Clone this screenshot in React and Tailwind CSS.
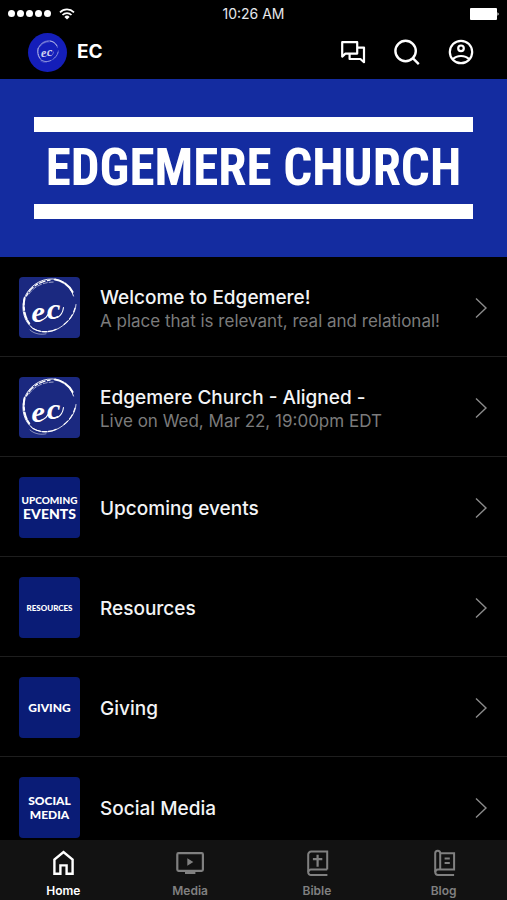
import { useState } from 'react';

const items = [
  { id: "welcome", title: "Welcome to Edgemere!", subtitle: "A place that is relevant, real and relational!", tile: "logo" },
  { id: "live", title: "Edgemere Church - Aligned -", subtitle: "Live on Wed, Mar 22, 19:00pm EDT", tile: "logo" },
  { id: "events", title: "Upcoming events", tile: "events" },
  { id: "resources", title: "Resources", tile: "resources" },
  { id: "giving", title: "Giving", tile: "giving" },
  { id: "social", title: "Social Media", tile: "social" },
];

const tabs = [
  { id: "home", label: "Home", Icon: HomeIcon },
  { id: "media", label: "Media", Icon: MediaIcon },
  { id: "bible", label: "Bible", Icon: BibleIcon },
  { id: "blog", label: "Blog", Icon: BlogIcon },
];

function HomeIcon() {
  return (
    <svg viewBox="0 0 28 28" className="size-7" fill="none" stroke="currentColor" strokeWidth="2.4">
      <path d="M5.4 24.8V10.6L14.5 3l9.1 7.6v14.2h-6v-8.4h-6.2v8.4z" />
    </svg>
  );
}

function MediaIcon() {
  return (
    <svg viewBox="0 0 28 28" className="size-7" fill="none" stroke="currentColor" strokeWidth="2.2">
      <rect x="1.3" y="4.2" width="25.6" height="17.6" rx="1.2" />
      <path d="M11.3 9.3v7.4l6-3.7z" fill="currentColor" stroke="none" />
      <path d="M9 22h10.4v3H9z" fill="currentColor" stroke="none" />
    </svg>
  );
}

function BibleIcon() {
  return (
    <svg viewBox="0 0 28 28" className="size-7" fill="none" stroke="currentColor" strokeWidth="2">
      <path d="M24.2 20.6V2.6H8.2a3 3 0 0 0-3 3v17.6a2.8 2.8 0 0 0 2.8 2.8h16.4" />
      <path d="M5.4 22.8a2.4 2.4 0 0 1 2.6-2.2h16.2" />
      <path d="M14.6 5.8v12M9.9 10.2h9.4" strokeWidth="2.2" />
    </svg>
  );
}

function BlogIcon() {
  return (
    <svg viewBox="0 0 28 28" className="size-7" fill="none" stroke="currentColor" strokeWidth="2">
      <path d="M10.2 4.2h13.9v16.4H8a2.7 2.7 0 0 0 0 5.4h16.1" />
      <path d="M5.2 23.3V4.2a2.5 2.5 0 0 1 5 0v16.4" />
      <path d="M14.6 9.4h5.2M14.6 14h5.2" />
    </svg>
  );
}

function ChatIcon() {
  return (
    <svg viewBox="0 0 28 28" className="size-7" fill="none" stroke="currentColor" strokeWidth="2.2">
      <path d="M3.2 4.2h15v11.4H6.4l-3.2 3z" strokeLinejoin="round" />
      <path d="M18.2 9.6h6.8v14.6l-3.6-3.2H10.6v-5.2" strokeLinejoin="round" />
    </svg>
  );
}

function SearchIcon() {
  return (
    <svg viewBox="0 0 28 28" className="size-7" fill="none" stroke="currentColor" strokeWidth="2.4">
      <circle cx="12.6" cy="13" r="10.2" />
      <path d="M19.8 20.2l6 6" />
    </svg>
  );
}

function ProfileIcon() {
  return (
    <svg viewBox="0 0 28 28" className="size-7" fill="none" stroke="currentColor" strokeWidth="2.2">
      <circle cx="14" cy="14" r="11.2" />
      <circle cx="14" cy="10.3" r="2.8" />
      <path d="M5.8 21.4c2-2.3 5-3.4 8.2-3.4s6.2 1.1 8.2 3.4" />
    </svg>
  );
}

// hand brushed ring with the script initials inside
function BrushLogo({ className }) {
  return (
    <svg viewBox="0 0 61 61" className={className} fill="none" stroke="#fff" strokeLinecap="round">
      <path d="M54.5 19C51 8 43 2.5 33.5 2C21 1.5 8.5 10 4.8 23C2.5 33 5 44.5 13 50.5" strokeWidth="0.9" />
      <path d="M5.6 21C3.6 30 5.4 41 11.5 48" strokeWidth="2" strokeDasharray="7 2 3 2.5" />
      <path d="M7.5 19C11.5 10.5 20 4.5 31 3.2" strokeWidth="1.3" strokeDasharray="3 2 6 2.5" />
      <path d="M36 2.6C44 4 50 8.5 53.6 15" strokeWidth="2" strokeDasharray="9 2 12 2" />
      <path d="M10 17C16 8.5 25 5 36 5" strokeWidth="0.6" strokeDasharray="4 2" />
      <path d="M12 50C20 56.5 32 56.5 41 50.5C50 45 56.5 36.5 57 27.5" strokeWidth="0.8" />
      <path d="M14 51.5C22 56 31 55.5 38.5 51.5" strokeWidth="1.2" strokeDasharray="8 2 4 2" />
      <path d="M11 53C16 57.5 23 57.8 27 56.8" strokeWidth="0.5" />
      <path d="M45 47.5C50 43.5 54 38 56 31" strokeWidth="1.1" strokeDasharray="5 3" />
      <g fill="#fff" stroke="none" className="font-['Liberation_Serif',serif] font-bold italic" fontSize="30">
        <text x="12.5" y="44.5">e</text>
        <text x="28" y="41.5">c</text>
      </g>
      <path d="M24 42.5C26.5 41.5 28 39.5 29 37.5M38.5 40.5C42 38.5 44 34.5 44.5 30.5" strokeWidth="1.1" />
    </svg>
  );
}

function Tile({ type }) {
  if (type === "logo") {
    return (
      <div className="size-[61px] shrink-0 rounded-sm bg-[#1b2980]">
        <BrushLogo className="size-full" />
      </div>
    );
  }

  return (
    <div className="flex size-[61px] shrink-0 flex-col items-center justify-center rounded-sm bg-[#0a1c76] font-['Lato',sans-serif] font-black text-white">
      {type === "events" && (
        <>
          <span className="text-[10px] leading-3">UPCOMING</span>
          <span className="text-sm leading-4">EVENTS</span>
        </>
      )}
      {type === "resources" && <span className="text-[8px] leading-3">RESOURCES</span>}
      {type === "giving" && <span className="text-xs leading-4">GIVING</span>}
      {type === "social" && (
        <>
          <span className="text-xs leading-[14px]">SOCIAL</span>
          <span className="text-xs leading-[14px]">MEDIA</span>
        </>
      )}
    </div>
  );
}

function StatusBar() {
  return (
    <div className="grid h-[27px] shrink-0 grid-cols-3 items-center px-2">
      <div className="flex items-center gap-2">
        <div className="flex gap-0.5">
          {[1, 2, 3, 4, 5].map((dot) => (
            <span key={dot} className="size-[7px] rounded-full bg-white" />
          ))}
        </div>
        <svg viewBox="0 0 16 12" className="h-3 w-4" fill="none" stroke="#fff" strokeWidth="1.7">
          <path d="M1 4.3a10 10 0 0 1 14 0M3.5 7a6.4 6.4 0 0 1 9 0" />
          <path d="M8 11.5L5.4 8.9a3.7 3.7 0 0 1 5.2 0z" fill="#fff" stroke="none" />
        </svg>
      </div>
      <span className="text-center text-sm leading-4 text-gray-200">10:26 AM</span>
      <svg viewBox="0 0 31 12" className="h-3 w-[31px] justify-self-end" fill="#fff">
        <rect x="2" width="27" height="12" rx="1" />
        <path d="M29.5 4.2a2 2 0 0 1 0 3.6z" />
      </svg>
    </div>
  );
}

export default function App() {
  const [activeTab, setActiveTab] = useState("home");

  return (
    <div className="flex h-screen flex-col bg-black font-['Inter',sans-serif] text-white">
      <StatusBar />

      <header className="flex h-[52px] shrink-0 items-center justify-between pr-8 pb-0.5 pl-7">
        <div className="flex items-center gap-2.5">
          <div className="flex size-[39px] items-center justify-center rounded-full bg-[#141eb9]">
            <BrushLogo className="size-6 opacity-80" />
          </div>
          <h1 className="text-[19px] leading-6 font-bold">EC</h1>
        </div>
        <div className="flex gap-[26px]">
          <button type="button" aria-label="Messages"><ChatIcon /></button>
          <button type="button" aria-label="Search"><SearchIcon /></button>
          <button type="button" aria-label="Profile"><ProfileIcon /></button>
        </div>
      </header>

      <main className="min-h-0 flex-1 overflow-y-auto [scrollbar-width:none]">
        <section className="bg-[#142ca0] px-[34px] py-[38px]">
          <div className="flex flex-col items-center border-y-[15px] border-white">
            <h2 className="font-['Roboto_Condensed','Liberation_Sans_Narrow',sans-serif] text-[51px] leading-[72px] font-bold whitespace-nowrap">
              EDGEMERE CHURCH
            </h2>
          </div>
        </section>

        <ul>
          {items.map((item) => (
            <li key={item.id} className="border-b border-[#1e1e1e]">
              <a href={`#${item.id}`} className="flex items-center gap-5 pt-5 pr-4 pb-[18px] pl-[19px]">
                <Tile type={item.tile} />
                <div className="min-w-0 flex-1 pt-0.5">
                  <p className="text-[19px] leading-6 font-medium text-gray-100">{item.title}</p>
                  {item.subtitle && <p className="text-[17px] leading-[22px] text-[#7b7b7b]">{item.subtitle}</p>}
                </div>
                <svg viewBox="0 0 20 24" className="h-6 w-5 shrink-0" fill="none" stroke="#8a8a8a" strokeWidth="1.4">
                  <path d="M5 2.5l10 9.5-10 9.5" />
                </svg>
              </a>
            </li>
          ))}
        </ul>
      </main>

      <nav className="grid h-[60px] shrink-0 grid-cols-4 bg-[#121212]">
        {tabs.map(({ id, label, Icon }) => (
          <button
            key={id}
            type="button"
            onClick={() => setActiveTab(id)}
            className={`flex flex-col items-center gap-1.5 pt-[9px] ${
              activeTab === id ? 'text-white' : 'text-[#808080]'
            }`}
          >
            <Icon />
            <span className="text-xs leading-4 font-semibold">{label}</span>
          </button>
        ))}
      </nav>
    </div>
  );
}
